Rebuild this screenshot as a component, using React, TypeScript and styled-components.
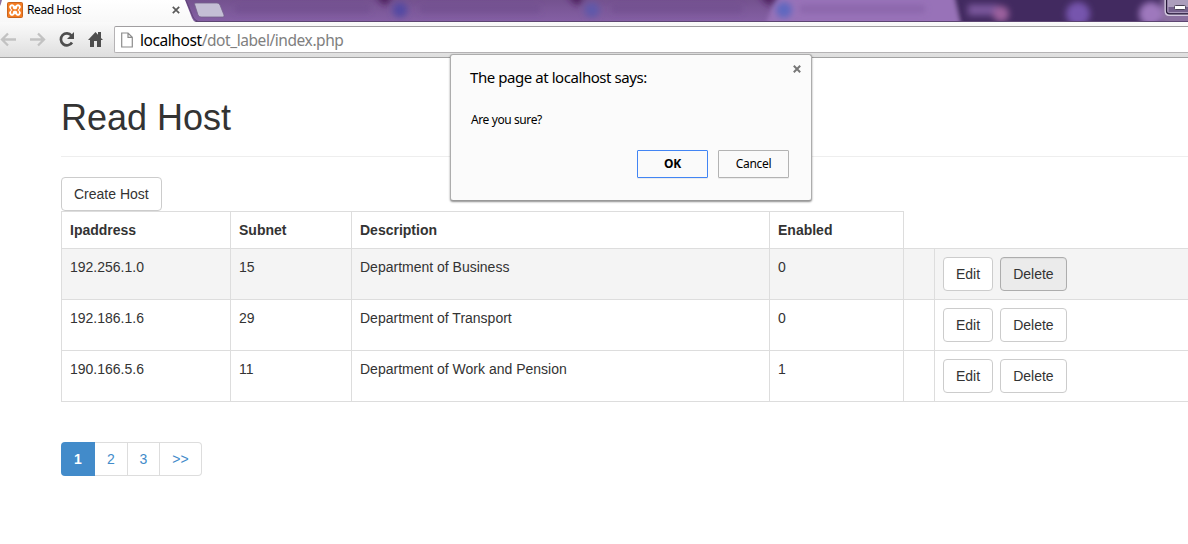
import React from "react";
import styled, { createGlobalStyle } from "styled-components";

const Global = createGlobalStyle`
  * { box-sizing: border-box; }
  body { margin: 0; background: #fff; overflow: hidden; }
`;

const uiFont = `"Noto Sans", "Open Sans", sans-serif`;

const Window = styled.div`
  position: relative;
  width: 1188px;
  height: 544px;
  overflow: hidden;
  background: #fff;
  color: #333;
  font: 14px/20px "Liberation Sans", Arial, sans-serif;
`;

const TabStrip = styled.div`
  position: relative;
  height: 22px;
  overflow: hidden;
  background: linear-gradient(#74528f, #8560a5);
`;

const GlassArt = styled.svg`
  display: block;
  width: 1188px;
  height: 22px;
`;

const Tab = styled.div`
  position: absolute;
  inset: 0 auto auto 0;
  display: flex;
  align-items: center;
  width: 185px;
  height: 22px;
  padding: 0 5px 3px 7px;
  font: 12px/18px ${uiFont};
  color: #000;
`;

const TabTitle = styled.span`
  flex: 1;
  margin-left: 4px;
  white-space: nowrap;
  letter-spacing: -0.42px;
`;

const Toolbar = styled.div`
  display: flex;
  height: 36px;
  padding-top: 4px;
  background: linear-gradient(#fafafa, #f0f0f0 40%, #dedede);
  border-bottom: 1px solid #a2a2a2;
`;

const NavIcons = styled.svg`
  flex: none;
  width: 114px;
  height: 27px;
`;

const AddressBar = styled.div`
  flex: 1;
  display: flex;
  align-items: center;
  height: 27px;
  padding-left: 6px;
  background: #fff;
  border: 1px solid #b5b3b5;
  border-top-color: #a09ea0;
  border-right: 0;
  border-radius: 2px 0 0 2px;
  font: 15.5px/24px ${uiFont};
  color: #000;
`;

const Url = styled.span`
  margin-left: 7px;
  letter-spacing: -0.43px;
  white-space: nowrap;
`;

const UrlPath = styled.span`
  color: #808080;
`;

const Page = styled.main`
  width: 1240px;
  padding: 40px 0 0 61px;
`;

const Title = styled.h1`
  margin: 0;
  padding-bottom: 18px;
  border-bottom: 1px solid #eee;
  font-size: 36px;
  font-weight: 400;
  line-height: 40px;
`;

const Actions = styled.div`
  display: flex;
  margin-top: 20px;
`;

const Button = styled.button<{ $pressed?: boolean }>`
  height: 34px;
  padding: 6px 12px;
  font: inherit;
  color: #333;
  white-space: nowrap;
  background: ${(p) => (p.$pressed ? "#ebebeb" : "#fff")};
  border: 1px solid ${(p) => (p.$pressed ? "#adadad" : "#ccc")};
  border-radius: 4px;
  box-shadow: ${(p) => (p.$pressed ? "inset 0 1px 1px rgba(0, 0, 0, 0.05)" : "none")};
`;

const Table = styled.div`
  width: 1179px;
  border-left: 1px solid #ddd;
`;

const Row = styled.div<{ $head?: boolean; $striped?: boolean }>`
  display: grid;
  grid-template-columns: 169px 121px 418px 134px 31px 1fr;
  height: ${(p) => (p.$head ? 38 : 51)}px;
  font-weight: ${(p) => (p.$head ? 700 : 400)};
  background: ${(p) => (p.$striped ? "#f4f4f4" : "#fff")};
  border-bottom: 1px solid #ddd;
`;

const Cell = styled.div<{ $head?: boolean }>`
  padding: 8px;
  white-space: nowrap;
  border-right: 1px solid #ddd;
  border-top: ${(p) => (p.$head ? "1px solid #ddd" : "0")};
`;

const RowActions = styled(Cell)`
  display: flex;
  gap: 7px;
`;

const Pagination = styled.nav`
  display: flex;
  margin-top: 40px;
`;

const PageLink = styled.a<{ $active?: boolean; $width: number }>`
  width: ${(p) => p.$width}px;
  height: 34px;
  padding: 7px 1px 7px 0;
  text-align: center;
  color: ${(p) => (p.$active ? "#fff" : "#428bca")};
  font-weight: ${(p) => (p.$active ? 700 : 400)};
  background: ${(p) => (p.$active ? "#428bca" : "#fff")};
  box-shadow: inset 0 1px #ddd, inset 0 -1px #ddd, inset -1px 0 #ddd;
  &:first-child { border-radius: 4px 0 0 4px; box-shadow: none; padding-right: 0; }
  &:last-child { border-radius: 0 4px 4px 0; box-shadow: none; border: 1px solid #ddd; border-left: 0; padding: 6px 0; }
`;

const Dialog = styled.section`
  position: absolute;
  left: 450px;
  top: 54px;
  width: 362px;
  height: 147px;
  padding: 11px 22px 0 20px;
  background: #fbfbfb;
  border: 1px solid #adadad;
  border-bottom-color: #999;
  border-radius: 3px;
  box-shadow: 0 1px 2px rgba(0, 0, 0, 0.45);
  font: 12px/18px ${uiFont};
  color: #000;
`;

const DialogTitle = styled.h2`
  margin: 0 0 0 -1px;
  font-size: 15px;
  font-weight: 400;
  line-height: 22px;
  letter-spacing: -0.44px;
`;

const DialogText = styled.p`
  margin: 23px 0 0;
  letter-spacing: -0.4px;
`;

const DialogButtons = styled.div`
  display: flex;
  justify-content: flex-end;
  gap: 10px;
  margin-top: 21px;
`;

const DialogButton = styled.button<{ $primary?: boolean }>`
  width: 71px;
  height: 28px;
  padding: 0;
  font: inherit;
  font-weight: ${(p) => (p.$primary ? 700 : 400)};
  letter-spacing: -0.3px;
  color: #000;
  background: #fafafa;
  border: 1px solid ${(p) => (p.$primary ? "#4285f4" : "#b3b3b3")};
  border-radius: 1px;
  box-shadow: 0 1px rgba(0, 0, 0, 0.06);
`;

const DialogClose = styled.svg`
  position: absolute;
  top: 10px;
  right: 10px;
  width: 8px;
  height: 8px;
`;

const hosts = [
  ["192.256.1.0", "15", "Department of Business", "0"],
  ["192.186.1.6", "29", "Department of Transport", "0"],
  ["190.166.5.6", "11", "Department of Work and Pension", "1"],
];

const Glass = () => (
  <GlassArt viewBox="0 0 1188 22">
    <defs>
      <filter id="soft" filterUnits="userSpaceOnUse" x="190" y="-20" width="1020" height="62">
        <feGaussianBlur stdDeviation="3.4" />
      </filter>
      <filter id="edge" filterUnits="userSpaceOnUse" x="740" y="-20" width="480" height="62">
        <feGaussianBlur stdDeviation="2" />
      </filter>
      <linearGradient id="tab" x2="0" y2="1">
        <stop offset="0" stopColor="#fff" />
        <stop offset="1" stopColor="#f8f8f8" />
      </linearGradient>
    </defs>
    <g filter="url(#edge)">
      <path d="M952 -10H1210V32H962Z" fill="#432a60" />
      <path d="M764 32Q772 0 784 -8H953L962 32Z" fill="#9872b8" />
    </g>
    <g filter="url(#soft)">
      <path d="M374 -6h20l-9 12zM566 -6h20l-9 12zM758 -6h20l-9 12z" fill="#4c1f5c" />
      <path d="M235 9H370M420 9H540M612 9H742" stroke="#6b4887" strokeWidth="7" opacity=".5" />
      <path d="M800 9H925" stroke="#7a579c" strokeWidth="7" opacity=".5" />
      <circle cx="400" cy="10" r="7.500" fill="#5349a3" />
      <circle cx="592" cy="10" r="7.500" fill="#5e59aa" />
      <circle cx="784" cy="10" r="8" fill="#5f68c0" />
      <path d="M968 10h30" stroke="#79579b" strokeWidth="11" />
      <circle cx="1001" cy="14" r="8" fill="#9b619d" />
      <circle cx="1078" cy="14" r="12" fill="#7654ad" />
      <circle cx="1151" cy="14" r="12" fill="#9e78bd" />
      <path d="M1162 -5h38v40h-38z" fill="#8a709f" />
    </g>
    <path d="M190 21.500H1188" stroke="#5d4672" />
    <path d="M0 0H185L192 18Q193 21 196 22H0Z" fill="url(#tab)" />
    <path d="M0 0H2Q1 4 0 6Z" fill="#8a70a0" />
    <path d="M186 0L193 17Q194 20 198 21.500" fill="none" stroke="#604577" />
    <path d="M194.500 4Q194 3 196 3H217Q219 3 220 5L224 15Q224.500 17 223 17H201Q199 17 198 15Z" fill="#c4bed5" stroke="#75618c" strokeWidth=".8" />
    <path d="M1165.500 -1V11Q1165.500 15 1169 15H1188" fill="none" stroke="#d3c8df" strokeWidth="2" />
    <path d="M1168 0h20v7h-20z" fill="#ac9ebc" />
    <path d="M1168 7h20v6h-20z" fill="#75618d" />
    <path d="M1166.500 0V11Q1166.500 13.800 1169.500 13.800H1188" fill="none" stroke="#261b38" strokeWidth="1.200" />
    <path d="M1168 0V11.500Q1168 12.500 1169.500 12.500H1188" fill="none" stroke="#b9aac8" strokeWidth=".8" />
    <rect x="1174.500" y="5.500" width="11" height="4" rx="1" fill="#fff" stroke="#4a4356" />
  </GlassArt>
);

const Favicon = () => (
  <svg width="16" height="16" viewBox="0 0 16 16">
    <rect x=".5" y=".5" width="15" height="15" rx="1" fill="#f47b20" stroke="#c9651f" />
    <path d="M5 5L11 11M11 5L5 11" stroke="#fff" strokeWidth="5.400" strokeLinecap="round" />
    <path d="M5 5V6.500L6.500 8L5 9.500V11M11 5V6.500L9.500 8L11 9.500V11M6.500 8H9.500" fill="none" stroke="#f47b20" strokeWidth="1.700" strokeLinecap="round" />
  </svg>
);

export default function App() {
  return (
    <Window>
      <Global />
      <TabStrip>
        <Glass />
        <Tab>
          <Favicon />
          <TabTitle>Read Host</TabTitle>
          <svg width="8" height="8" viewBox="0 0 8 8"><path d="M.8 .8l6.400 6.400M7.200 .8L.8 7.200" stroke="#5a5a5a" strokeWidth="1.700" /></svg>
        </Tab>
      </TabStrip>
      <Toolbar>
        <NavIcons viewBox="0 0 114 27">
          <g fill="none" stroke="#c2c2c2" strokeWidth="2.300">
            <path d="M2 13.500H16M8 7.500L2 13.500L8 19.500" />
            <path d="M30 13.500H44M38 7.500L44 13.500L38 19.500" />
          </g>
          <path d="M71.500 9.500A6 6 0 1 0 72 16.500" fill="none" stroke="#4e4e4e" strokeWidth="2.700" />
          <path d="M74 6V13H67Z" fill="#4e4e4e" />
          <path d="M88 14L95.500 6L98 8.700V6H101V12L103 14H101V21H97V15H94V21H90V14Z" fill="#4e4e4e" />
        </NavIcons>
        <AddressBar>
          <svg width="12" height="16" viewBox="0 0 12 16">
            <path d="M.7 1H7L11.300 5.300V15H.7ZM7 1V5.300H11.300" fill="#fff" stroke="#8c8c8c" strokeWidth="1.200" />
          </svg>
          <Url>localhost<UrlPath>/dot_label/index.php</UrlPath></Url>
        </AddressBar>
      </Toolbar>
      <Page>
        <Title>Read Host</Title>
        <Actions><Button>Create Host</Button></Actions>
        <Table>
          <Row $head>
            {["Ipaddress", "Subnet", "Description", "Enabled"].map((h) => <Cell $head key={h}>{h}</Cell>)}
          </Row>
          {hosts.map((host, i) => (
            <Row key={host[0]} $striped={i === 0}>
              {host.map((value, j) => <Cell key={j}>{value}</Cell>)}
              <Cell />
              <RowActions>
                <Button>Edit</Button>
                <Button $pressed={i === 0}>Delete</Button>
              </RowActions>
            </Row>
          ))}
        </Table>
        <Pagination>
          <PageLink $active $width={34}>1</PageLink>
          <PageLink $width={33}>2</PageLink>
          <PageLink $width={32}>3</PageLink>
          <PageLink $width={42}>&gt;&gt;</PageLink>
        </Pagination>
      </Page>
      <Dialog>
        <DialogClose viewBox="0 0 8 8"><path d="M.8 .8l6.400 6.400M7.200 .8L.8 7.200" stroke="#777" strokeWidth="2" /></DialogClose>
        <DialogTitle>The page at localhost says:</DialogTitle>
        <DialogText>Are you sure?</DialogText>
        <DialogButtons>
          <DialogButton $primary>OK</DialogButton>
          <DialogButton>Cancel</DialogButton>
        </DialogButtons>
      </Dialog>
    </Window>
  );
}
